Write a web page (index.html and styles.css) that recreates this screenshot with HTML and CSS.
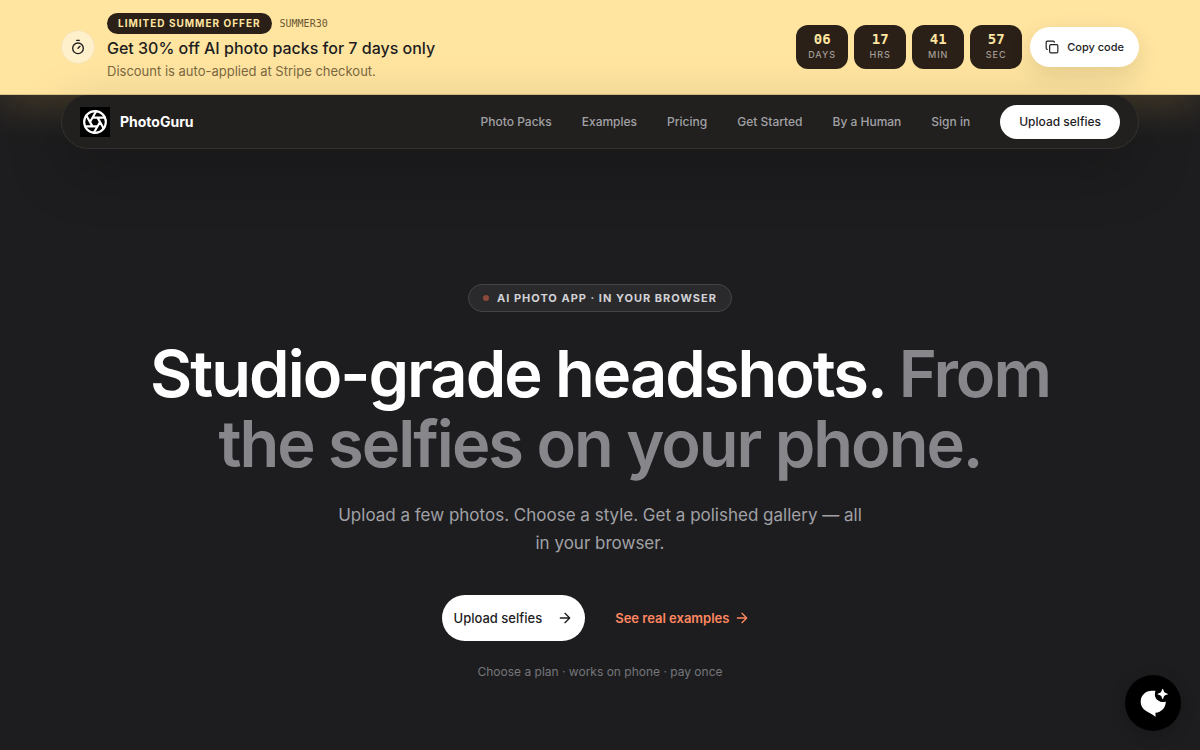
FILE: index.html
```html
<!DOCTYPE html>
<html lang="en">

<head>
    <meta charset="UTF-8">
    <meta name="viewport" content="width=device-width, initial-scale=1.0">
    <title>PhotoGuru</title>
    <link rel="stylesheet" href="styles.css">
</head>

<body>
    <aside class="promo">
        <div class="wrap promo-inner">
            <span class="promo-icon">
                <svg width="16" height="16" viewBox="0 0 24 24" fill="none" stroke="currentColor" stroke-width="2" stroke-linecap="round" stroke-linejoin="round">
                    <path d="M10 2h4M12 14l3-3" />
                    <circle cx="12" cy="14" r="8" />
                </svg>
            </span>
            <div class="promo-text">
                <div class="promo-top">
                    <span class="promo-tag">Limited summer offer</span>
                    <code class="promo-code">SUMMER30</code>
                </div>
                <p class="promo-title">Get 30% off AI photo packs for 7 days only</p>
                <p class="promo-note">Discount is auto-applied at Stripe checkout.</p>
            </div>
            <div class="countdown">
                <div class="unit"><strong>06</strong><span>Days</span></div>
                <div class="unit"><strong>17</strong><span>Hrs</span></div>
                <div class="unit"><strong>41</strong><span>Min</span></div>
                <div class="unit"><strong>57</strong><span>Sec</span></div>
            </div>
            <button type="button" class="copy-button">
                <svg width="14" height="14" viewBox="0 0 24 24" fill="none" stroke="currentColor" stroke-width="2" stroke-linecap="round" stroke-linejoin="round">
                    <rect x="8" y="8" width="14" height="14" rx="2" />
                    <path d="M4 16c-1.100 0-2-.9-2-2V4c0-1.100.9-2 2-2h10c1.100 0 2 .9 2 2" />
                </svg>
                Copy code
            </button>
        </div>
    </aside>

    <header class="wrap navbar">
        <a href="#" class="brand">
            <span class="brand-mark">
                <svg width="26" height="26" viewBox="0 0 24 24" fill="none" stroke="currentColor" stroke-width="2" stroke-linecap="round" stroke-linejoin="round">
                    <circle cx="12" cy="12" r="10" />
                    <path d="M14.310 8l5.740 9.940M9.690 8h11.480M7.380 12l5.740-9.940M9.690 16L3.950 6.060M14.310 16H2.830M16.620 12l-5.740 9.940" />
                </svg>
            </span>
            PhotoGuru
        </a>
        <nav class="links">
            <a href="#">Photo Packs</a>
            <a href="#">Examples</a>
            <a href="#">Pricing</a>
            <a href="#">Get Started</a>
            <a href="#">By a Human</a>
            <a href="#">Sign in</a>
            <a href="#" class="nav-upload">Upload selfies</a>
        </nav>
    </header>

    <main class="hero">
        <p class="badge"><span class="dot"></span>AI photo app · In your browser</p>
        <h1>Studio-grade headshots. <span>From the selfies on your phone.</span></h1>
        <p class="lead">Upload a few photos. Choose a style. Get a polished gallery — all in your browser.</p>
        <div class="actions">
            <a href="#" class="upload">
                Upload selfies
                <svg width="16" height="16" viewBox="0 0 24 24" fill="none" stroke="currentColor" stroke-width="2" stroke-linecap="round" stroke-linejoin="round">
                    <path d="M5 12h14M12 5l7 7-7 7" />
                </svg>
            </a>
            <a href="#" class="see-examples">
                See real examples
                <svg width="16" height="16" viewBox="0 0 24 24" fill="none" stroke="currentColor" stroke-width="2" stroke-linecap="round" stroke-linejoin="round">
                    <path d="M5 12h14M12 5l7 7-7 7" />
                </svg>
            </a>
        </div>
        <p class="footnote">Choose a plan · works on phone · pay once</p>
    </main>

    <button type="button" class="chat" aria-label="Open chat">
        <svg width="32" height="32" viewBox="0 0 32 32" fill="currentColor">
            <path d="M18.500 3.800H15C8.500 3.800 3.700 8.600 3.700 14.600c0 5.400 3.300 8.900 8 10.900 2.600 1.100 4.600 2.500 6.800 4.400V25.800c6-.6 10.300-5 10.300-11.300-1.200.5-2.600.6-3.900.4-4-.6-7-3.700-7-7.500 0-1.300.2-2.500.6-3.600z" />
            <path d="M25.700 1.800c.6 0 1 2.600 1.700 3.400s3.600 1.200 3.600 1.800-2.900 1.100-3.600 1.800-1.100 3.500-1.700 3.500-1-2.800-1.800-3.500S20.400 7.600 20.400 7s2.800-1 3.500-1.800 1.200-3.400 1.800-3.400z" />
        </svg>
    </button>
</body>

</html>
```
FILE: styles.css
```css
* {
    box-sizing: border-box;
}

body {
    margin: 0;
    min-height: 100vh;
    overflow-x: hidden;
    font-family: Inter, "Liberation Sans", sans-serif;
    background-color: #1d1d1f;
    color: #fff;
}

p,
h1 {
    margin: 0;
}

a {
    color: inherit;
    text-decoration: none;
}

button {
    border: none;
    font-family: inherit;
    cursor: pointer;
}

svg {
    flex: none;
}

.wrap {
    width: calc(100% - 48px);
    max-width: 1078px;
    margin: 0 auto;
}

/* Promo bar */
.promo {
    padding: 13px 0;
    background-color: #ffe5a0;
    border-bottom: 1px solid #d9c388;
    box-shadow: 0 12px 40px rgba(255, 195, 90, 0.18);
    color: #1d1d1f;
}

.promo-inner {
    display: flex;
    align-items: center;
}

.promo-icon {
    display: flex;
    align-items: center;
    justify-content: center;
    width: 34px;
    height: 34px;
    margin-right: 12px;
    border: 1px solid #f8e3b2;
    border-radius: 50%;
    background-color: #fff0cc;
}

.promo-text {
    margin-right: auto;
}

.promo-top {
    display: flex;
    align-items: center;
    gap: 8px;
}

.promo-tag {
    padding: 0 11px;
    border-radius: 11px;
    background-color: #2a2018;
    color: #ffe5a0;
    font-size: 10px;
    font-weight: 700;
    line-height: 21px;
    letter-spacing: 1px;
    text-transform: uppercase;
}

.promo-code {
    color: #6b5732;
    font-family: "DejaVu Sans Mono", monospace;
    font-size: 10px;
}

.promo-title {
    font-size: 16px;
    font-weight: 500;
    line-height: 28px;
}

.promo-note {
    color: #7a673f;
    font-size: 13px;
    line-height: 19px;
}

.countdown {
    display: flex;
    gap: 6px;
    margin-right: 8px;
}

.unit {
    display: flex;
    flex-direction: column;
    align-items: center;
    width: 52px;
    height: 44px;
    padding-top: 6px;
    border-radius: 12px;
    background-color: #2a2018;
}

.unit strong {
    color: #ffe5a0;
    font-family: "DejaVu Sans Mono", monospace;
    font-size: 14px;
    line-height: 16px;
}

.unit span {
    color: #a39c95;
    font-size: 9px;
    font-weight: 500;
    line-height: 16px;
    letter-spacing: 1px;
    text-transform: uppercase;
}

.copy-button {
    display: flex;
    align-items: center;
    gap: 8px;
    height: 40px;
    padding: 0 15px;
    border-radius: 20px;
    background-color: #fff;
    box-shadow: 0 8px 24px rgba(42, 32, 24, 0.12);
    color: #1d1d1f;
    font-size: 11px;
    font-weight: 500;
}

/* Navigation */
.navbar {
    display: flex;
    align-items: center;
    justify-content: space-between;
    height: 54px;
    padding: 0 18px;
    border: 1px solid #33322f;
    border-top: none;
    border-radius: 27px;
    background-color: #21201e;
    box-shadow: 0 20px 60px rgba(0, 0, 0, 0.22);
}

.brand {
    display: flex;
    align-items: center;
    gap: 10px;
    font-size: 14px;
    font-weight: 700;
}

.brand-mark {
    display: flex;
    align-items: center;
    justify-content: center;
    width: 30px;
    height: 30px;
    background-color: #000;
}

.links {
    display: flex;
    align-items: center;
    gap: 30px;
    color: #a1a1a6;
    font-size: 12px;
    font-weight: 500;
}

.nav-upload {
    padding: 0 19px;
    border-radius: 17px;
    background-color: #fff;
    color: #1d1d1f;
    line-height: 34px;
}

/* Hero */
.hero {
    display: flex;
    flex-direction: column;
    align-items: center;
    padding: 135px 24px 60px;
    text-align: center;
}

.badge {
    display: flex;
    align-items: center;
    gap: 8px;
    padding: 0 14px;
    border: 1px solid #444446;
    border-radius: 14px;
    background-color: #2a2a2c;
    color: #d2d2d7;
    font-size: 11px;
    font-weight: 700;
    line-height: 26px;
    letter-spacing: 1px;
    text-transform: uppercase;
}

.dot {
    width: 6px;
    height: 6px;
    border-radius: 50%;
    background-color: #8d4a38;
}

.hero h1 {
    max-width: 940px;
    margin-top: 27px;
    font-size: 65px;
    font-weight: 600;
    line-height: 70px;
    letter-spacing: -2px;
}

.hero h1 span {
    color: #86868b;
}

.lead {
    max-width: 540px;
    margin-top: 22px;
    color: #a1a1a6;
    font-size: 17px;
    line-height: 28px;
}

.actions {
    display: flex;
    align-items: center;
    gap: 30px;
    margin-top: 38px;
    font-size: 13px;
}

.upload {
    display: flex;
    align-items: center;
    gap: 15px;
    height: 46px;
    padding: 0 12px;
    border-radius: 23px;
    background-color: #fff;
    color: #1d1d1f;
    font-weight: 500;
}

.see-examples {
    display: flex;
    align-items: center;
    gap: 5px;
    padding-right: 8px;
    color: #ff875f;
    font-weight: 600;
}

.footnote {
    margin-top: 21px;
    color: #76767b;
    font-size: 12px;
    line-height: 20px;
}

/* Chat launcher */
.chat {
    position: fixed;
    right: 19px;
    bottom: 19px;
    display: flex;
    align-items: center;
    justify-content: center;
    width: 56px;
    height: 56px;
    padding: 0;
    border-radius: 50%;
    background-color: #000;
    box-shadow: 0 4px 16px rgba(0, 0, 0, 0.2);
    color: #fff;
}
```
